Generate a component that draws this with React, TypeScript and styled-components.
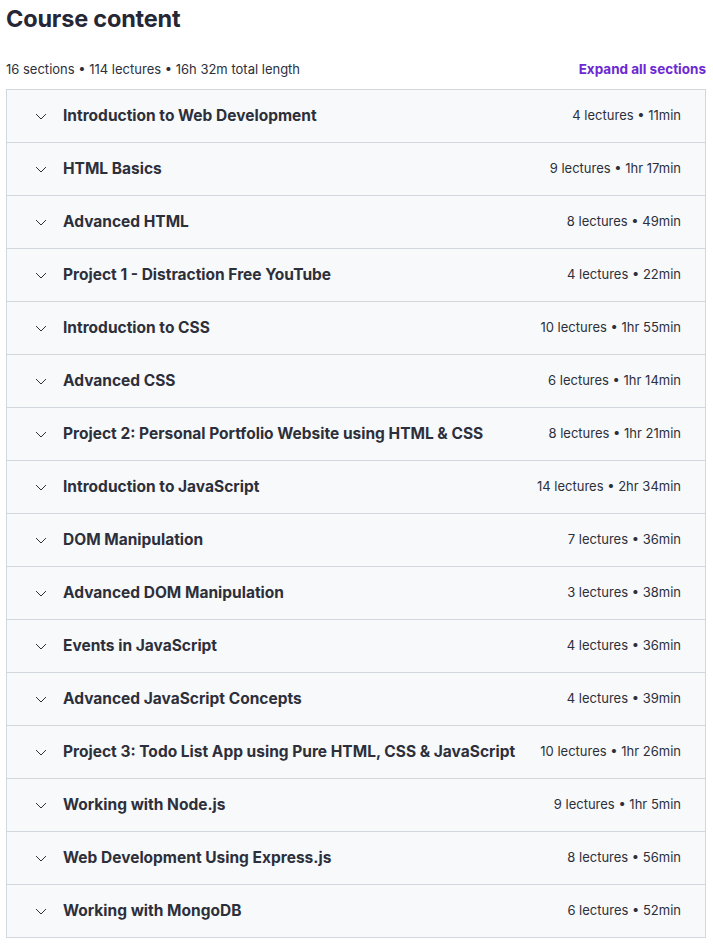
import React from "react";
import styled, { createGlobalStyle } from "styled-components";

const GlobalStyle = createGlobalStyle`
  html, body { margin: 0; padding: 0; background: #ffffff; }
  body { font-family: Inter, "Noto Sans", "Liberation Sans", sans-serif; color: #2d2f3b; }
`;

const Page = styled.div`
  width: 700px;
  padding: 4px 0 0 6px;
`;

const Title = styled.h2`
  margin: 0;
  font-size: 23.5px;
  line-height: 30px;
  font-weight: 700;
  letter-spacing: -0.2px;
  color: #262736;
`;

const Summary = styled.div`
  display: flex;
  align-items: center;
  justify-content: space-between;
  margin-top: 20px;
  height: 30px;
  padding-bottom: 1px;
`;

const Stats = styled.span`
  font-size: 13px;
  color: #2d2f3b;
`;

const ExpandLink = styled.button`
  border: none;
  background: none;
  padding: 0;
  font-family: inherit;
  font-size: 13.5px;
  font-weight: 700;
  color: #6d28d2;
  cursor: pointer;
`;

const Sections = styled.div`
  margin-top: 4px;
  border: 1px solid #d1d7dc;
  border-bottom: none;
`;

const SectionRow = styled.div`
  display: flex;
  align-items: center;
  height: 51px;
  padding: 0 24px 1px 26px;
  background: #f7f9fa;
  border-bottom: 1px solid #d1d7dc;
`;

const Chevron = styled.svg`
  width: 16px;
  height: 16px;
  flex: none;
  margin-right: 14px;
  color: #2d2f3b;
`;

const SectionTitle = styled.span`
  flex: 1;
  font-size: 15.5px;
  font-weight: 700;
  color: #2d2f3b;
`;

const SectionMeta = styled.span`
  font-size: 13px;
  line-height: 16px;
  padding-bottom: 2px;
  color: #2d2f3b;
  white-space: nowrap;
`;

const sections: [string, string][] = [
  ["Introduction to Web Development", "4 lectures • 11min"],
  ["HTML Basics", "9 lectures • 1hr 17min"],
  ["Advanced HTML", "8 lectures • 49min"],
  ["Project 1 - Distraction Free YouTube", "4 lectures • 22min"],
  ["Introduction to CSS", "10 lectures • 1hr 55min"],
  ["Advanced CSS", "6 lectures • 1hr 14min"],
  ["Project 2: Personal Portfolio Website using HTML & CSS", "8 lectures • 1hr 21min"],
  ["Introduction to JavaScript", "14 lectures • 2hr 34min"],
  ["DOM Manipulation", "7 lectures • 36min"],
  ["Advanced DOM Manipulation", "3 lectures • 38min"],
  ["Events in JavaScript", "4 lectures • 36min"],
  ["Advanced JavaScript Concepts", "4 lectures • 39min"],
  ["Project 3: Todo List App using Pure HTML, CSS & JavaScript", "10 lectures • 1hr 26min"],
  ["Working with Node.js", "9 lectures • 1hr 5min"],
  ["Web Development Using Express.js", "8 lectures • 56min"],
  ["Working with MongoDB", "6 lectures • 52min"],
];

export default function App() {
  return (
    <Page>
      <GlobalStyle />
      <Title>Course content</Title>
      <Summary>
        <Stats>16 sections • 114 lectures • 16h 32m total length</Stats>
        <ExpandLink>Expand all sections</ExpandLink>
      </Summary>
      <Sections>
        {sections.map(([name, meta]) => (
          <SectionRow key={name}>
            <Chevron viewBox="0 0 24 24" fill="none" stroke="currentColor" strokeWidth="1.5" strokeLinecap="round" strokeLinejoin="round">
              <path d="M5 9.5l7 7 7-7" />
            </Chevron>
            <SectionTitle>{name}</SectionTitle>
            <SectionMeta>{meta}</SectionMeta>
          </SectionRow>
        ))}
      </Sections>
    </Page>
  );
}
